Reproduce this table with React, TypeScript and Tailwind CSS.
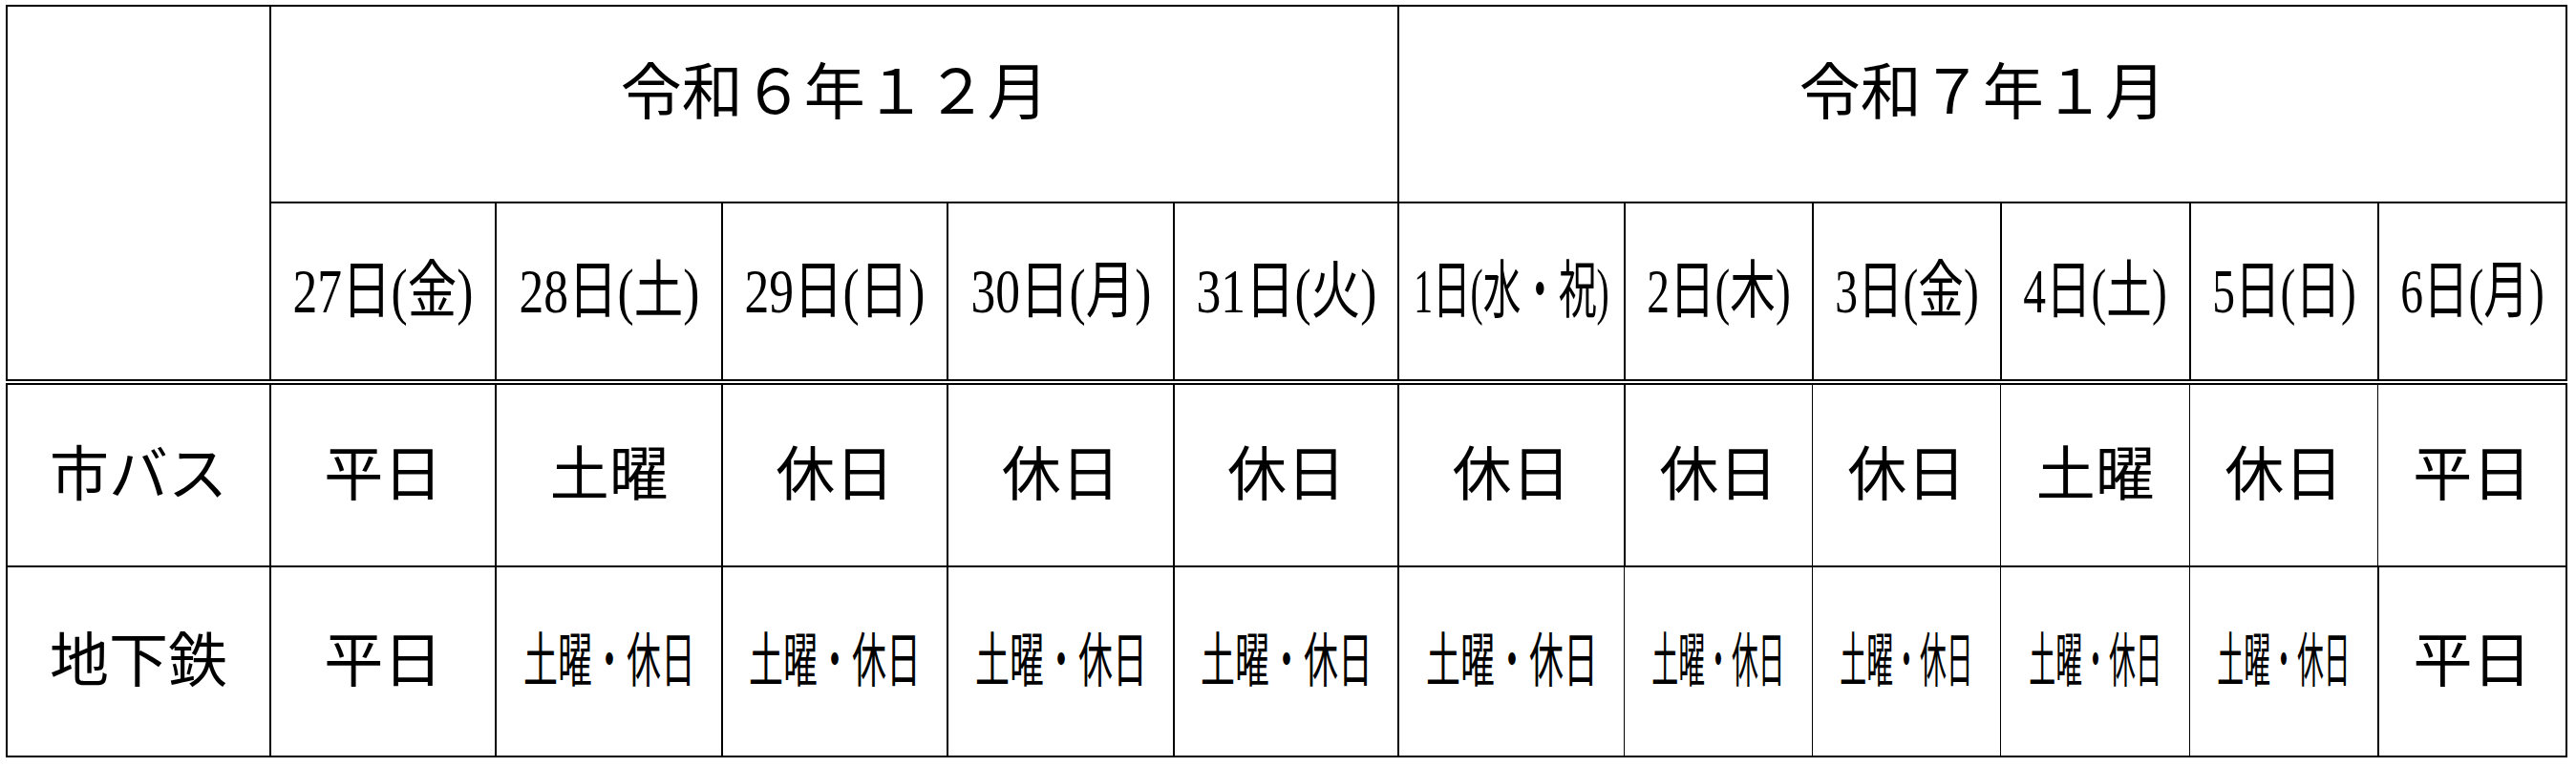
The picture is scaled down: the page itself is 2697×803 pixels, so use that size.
import {FC} from 'react';

interface DateCell {
    label: string;
    fit: string;
}

const dates: DateCell[] = [
    {label: "27日(金)", fit: "scale-x-[0.78]"},
    {label: "28日(土)", fit: "scale-x-[0.78]"},
    {label: "29日(日)", fit: "scale-x-[0.78]"},
    {label: "30日(月)", fit: "scale-x-[0.78]"},
    {label: "31日(火)", fit: "scale-x-[0.78]"},
    {label: "1日(水・祝)", fit: "scale-x-[0.6]"},
    {label: "2日(木)", fit: "scale-x-[0.72]"},
    {label: "3日(金)", fit: "scale-x-[0.72]"},
    {label: "4日(土)", fit: "scale-x-[0.72]"},
    {label: "5日(日)", fit: "scale-x-[0.72]"},
    {label: "6日(月)", fit: "scale-x-[0.72]"},
];

const bus = ["平日", "土曜", "休日", "休日", "休日", "休日", "休日", "休日", "土曜", "休日", "平日"];
const subway = ["平日", "土曜・休日", "土曜・休日", "土曜・休日", "土曜・休日", "土曜・休日", "土曜・休日", "土曜・休日", "土曜・休日", "土曜・休日", "平日"];

// which columns get a hairline on their left edge in the body rows
const busThin = [7, 8, 9, 10];
const subwayThin = [6, 7, 8, 9];

const fitFor = (text: string, col: number) => {
    if (text !== "土曜・休日") return "";
    return col >= 6 ? "scale-x-[0.45]" : "scale-x-[0.58]";
};

const Fitted: FC<{text: string; size: string; fit: string}> = ({text, size, fit}) => (
    <div className="flex justify-center">
        <span className={`shrink-0 whitespace-nowrap leading-none ${size} ${fit}`}>{text}</span>
    </div>
);

const BodyCell: FC<{text: string; col: number; thin: number[]}> = ({text, col, thin}) => {
    const left = thin.includes(col) ? "border-l" : "border-l-2";
    const right = thin.includes(col + 1) ? "border-r" : "border-r-2";
    return (
        <td className={`${left} ${right} border-y-2 border-black align-middle p-0`}>
            <Fitted text={text} size="text-[62px]" fit={fitFor(text, col)}/>
        </td>
    );
};

const App: FC = () => {
    return (
        <div className="w-[2697px] h-[803px] bg-white text-black pl-[6px] pt-[5px] font-['Liberation_Serif','Noto_Sans_CJK_JP',serif]">
            <table className="table-fixed border-collapse w-[2682px]">
                <colgroup>
                    <col className="w-[276px]"/>
                    <col className="w-[236px]"/>
                    <col className="w-[237px]"/>
                    <col className="w-[236px]"/>
                    <col className="w-[237px]"/>
                    <col className="w-[235px]"/>
                    <col className="w-[236px]"/>
                    <col className="w-[197px]"/>
                    <col className="w-[197px]"/>
                    <col className="w-[198px]"/>
                    <col className="w-[197px]"/>
                    <col className="w-[197px]"/>
                </colgroup>
                <tbody>
                    <tr className="h-[206px]">
                        <td rowSpan={2} className="border-2 border-b-[6px] border-double border-black"></td>
                        <td colSpan={5} className="border-2 border-black text-center align-middle pb-[22px]">
                            <span className="text-[64px] leading-none">令和６年１２月</span>
                        </td>
                        <td colSpan={6} className="border-2 border-black text-center align-middle pb-[22px]">
                            <span className="text-[64px] leading-none">令和７年１月</span>
                        </td>
                    </tr>
                    <tr className="h-[188px]">
                        {dates.map(({label, fit}) => (
                            <td key={label} className="border-2 border-b-[6px] border-double border-black align-middle p-0">
                                <Fitted text={label} size="text-[66px]" fit={fit}/>
                            </td>
                        ))}
                    </tr>
                    <tr className="h-[193px]">
                        <td className="border-2 border-black text-center align-middle">
                            <span className="text-[62px] leading-none">市バス</span>
                        </td>
                        {bus.map((t, i) => <BodyCell key={i} text={t} col={i} thin={busThin}/>)}
                    </tr>
                    <tr className="h-[199px]">
                        <td className="border-2 border-black text-center align-middle">
                            <span className="text-[62px] leading-none">地下鉄</span>
                        </td>
                        {subway.map((t, i) => <BodyCell key={i} text={t} col={i} thin={subwayThin}/>)}
                    </tr>
                </tbody>
            </table>
        </div>
    );
};

export default App;
